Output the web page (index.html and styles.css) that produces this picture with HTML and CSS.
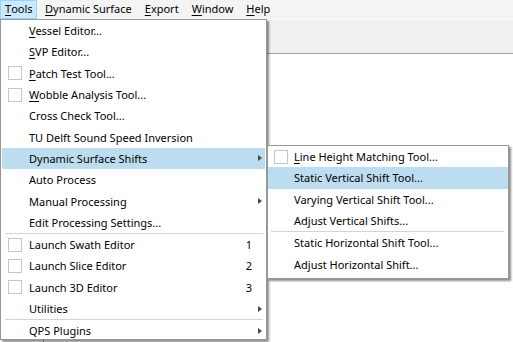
FILE: index.html
```html
<!DOCTYPE html>
<html>
<head>
<meta charset="utf-8">
<link rel="stylesheet" href="styles.css">
</head>
<body>
<div class="app">
  <div class="menubar">
    <span class="mb-item active"><u>T</u>ools</span>
    <span class="mb-item first"><u>D</u>ynamic Surface</span>
    <span class="mb-item"><u>E</u>xport</span>
    <span class="mb-item"><u>W</u>indow</span>
    <span class="mb-item"><u>H</u>elp</span>
  </div>
  <div class="toolbar"></div>
  <div class="content">
    <div class="side-pane"></div>
    <div class="main-pane"></div>
  </div>
</div>

<div class="menu main-menu">
  <div class="item"><span class="gutter"></span><span class="label"><u>V</u>essel Editor...</span></div>
  <div class="item"><span class="gutter"></span><span class="label"><u>S</u>VP Editor...</span></div>
  <div class="item"><span class="gutter"><span class="check"></span></span><span class="label"><u>P</u>atch Test Tool...</span></div>
  <div class="item"><span class="gutter"><span class="check"></span></span><span class="label"><u>W</u>obble Analysis Tool...</span></div>
  <div class="item"><span class="gutter"></span><span class="label">Cross Check Tool...</span></div>
  <div class="item"><span class="gutter"></span><span class="label">TU Delft Sound Speed Inversion</span></div>
  <div class="item hl"><span class="gutter"></span><span class="label">Dynamic Surface Shifts</span><span class="arrow"></span></div>
  <div class="item"><span class="gutter"></span><span class="label">Auto Process</span></div>
  <div class="item"><span class="gutter"></span><span class="label">Manual Processing</span><span class="arrow"></span></div>
  <div class="item"><span class="gutter"></span><span class="label">Edit Processing Settings...</span></div>
  <div class="sep"></div>
  <div class="item"><span class="gutter"><span class="check"></span></span><span class="label">Launch Swath Editor</span><span class="key">1</span></div>
  <div class="item"><span class="gutter"><span class="check"></span></span><span class="label">Launch Slice Editor</span><span class="key">2</span></div>
  <div class="item"><span class="gutter"><span class="check"></span></span><span class="label">Launch 3D Editor</span><span class="key">3</span></div>
  <div class="item"><span class="gutter"></span><span class="label">Utilities</span><span class="arrow"></span></div>
  <div class="sep"></div>
  <div class="item"><span class="gutter"></span><span class="label">QPS Plugins</span><span class="arrow"></span></div>
</div>

<div class="menu sub-menu">
  <div class="item"><span class="gutter"><span class="check"></span></span><span class="label"><u>L</u>ine Height Matching Tool...</span></div>
  <div class="item hl"><span class="gutter"></span><span class="label">Static Vertical Shift Tool...</span></div>
  <div class="item"><span class="gutter"></span><span class="label">Varying Vertical Shift Tool...</span></div>
  <div class="item"><span class="gutter"></span><span class="label">Adjust Vertical Shifts...</span></div>
  <div class="sep"></div>
  <div class="item"><span class="gutter"></span><span class="label">Static Horizontal Shift Tool...</span></div>
  <div class="item"><span class="gutter"></span><span class="label">Adjust Horizontal Shift...</span></div>
</div>
</body>
</html>
```

FILE: styles.css
```css
html, body {
  margin: 0;
  padding: 0;
  background: #ffffff;
}
body {
  font-family: "Noto Sans", "Open Sans", sans-serif;
  font-size: 11px;
  color: #000;
  width: 513px;
  height: 342px;
  overflow: hidden;
  position: relative;
}
u {
  text-decoration: underline;
  text-underline-offset: 2px;
}
.app {
  display: flex;
  flex-direction: column;
  height: 342px;
}
.menubar {
  height: 19px;
  background: #f4f4f4;
  display: flex;
  align-items: stretch;
}
.mb-item {
  display: flex;
  align-items: center;
  padding: 0 5.5px 1px 5.5px;
  border: 1px solid transparent;
  line-height: 16px;
}
.mb-item.first {
  margin-left: 2px;
}
.mb-item.active {
  background: #cce8ff;
  border-color: #99d1ff;
  padding: 0 3px 1px 4px;
}
.toolbar {
  height: 33px;
  background: #f0f0f0;
  border-top: 1px solid #fbfbfb;
  border-bottom: 1px solid #a0a0a0;
}
.content {
  flex: 1;
  display: flex;
  background: #fff;
}
.side-pane {
  width: 43px;
  border-right: 1px solid #a0a0a0;
}
.main-pane {
  flex: 1;
}
.menu {
  position: absolute;
  background: #fff;
  border: 1px solid #979797;
  box-shadow: 2px 2px 2px rgba(0, 0, 0, 0.45);
  box-sizing: border-box;
}
.main-menu {
  left: 0;
  top: 19px;
  width: 267px;
  height: 321px;
}
.sub-menu {
  left: 267px;
  top: 145px;
  width: 242px;
  height: 134px;
}
.item {
  display: flex;
  align-items: center;
  height: 21.3px;
  margin: 0 1px;
  white-space: nowrap;
}
.sub-menu .item {
  margin: 0;
}
.item.hl {
  background: #bcdcef;
}
.gutter {
  width: 27px;
  flex: none;
  display: flex;
  align-items: center;
  padding-left: 6px;
  box-sizing: border-box;
}
.sub-menu .gutter {
  width: 26px;
  padding-left: 6px;
}
.check {
  width: 14px;
  height: 14px;
  border: 1px solid #c6c6c6;
  box-sizing: border-box;
  background: #fff;
}
.label {
  flex: 1;
}
.key {
  margin-right: 13px;
}
.arrow {
  width: 0;
  height: 0;
  border-left: 4px solid #4a4a4a;
  border-top: 3.5px solid transparent;
  border-bottom: 3.5px solid transparent;
  margin-right: 3px;
}
.sep {
  height: 1px;
  background: #d4d4d4;
  margin: 0 3px 0 4px;
}
.sub-menu .sep {
  margin: 0 4px 0 3px;
}
```
